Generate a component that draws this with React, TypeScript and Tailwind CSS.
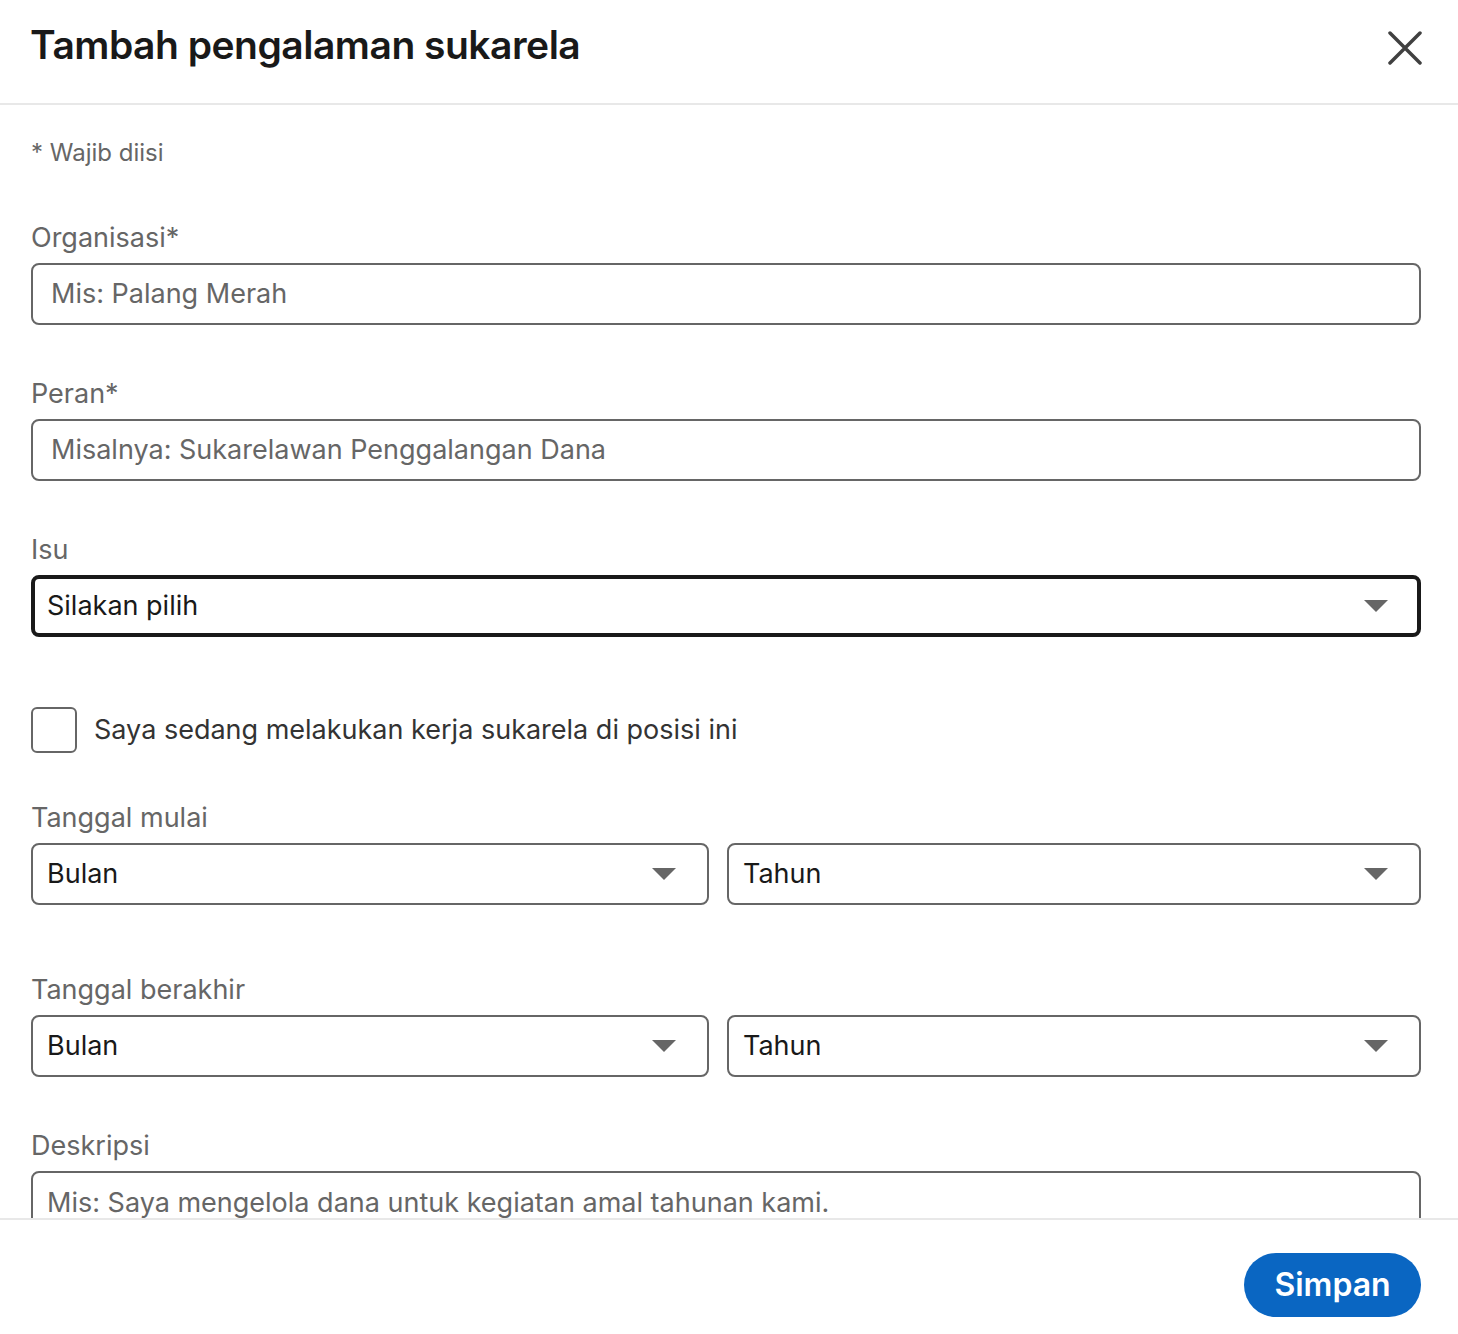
import { useState } from "react"

function Caret() {
  return (
    <svg width="24" height="12" viewBox="0 0 24 12" className="shrink-0">
      <path d="M0 0 L24 0 L12 12 Z" fill="#666666" />
    </svg>
  )
}

function Select({ value, focused }: { value: string; focused?: boolean }) {
  return (
    <div
      className={
        focused
          ? "flex h-[62px] items-center justify-between rounded-[8px] border-[4px] border-[#191919] pl-[12px] pr-[29px]"
          : "flex h-[62px] items-center justify-between rounded-[8px] border-2 border-[#666666] pl-[14px] pr-[31px]"
      }
    >
      <span className="text-[27px] text-[#191919]">{value}</span>
      <Caret />
    </div>
  )
}

function Label({ children, className }: { children: React.ReactNode; className?: string }) {
  return (
    <div className={"h-[40px] text-[27px] leading-[40px] text-[#666666] " + (className ?? "")}>
      {children}
    </div>
  )
}

export default function App() {
  const [checked, setChecked] = useState(false)

  return (
    <div
      className="flex h-[1334px] w-[1458px] flex-col overflow-hidden bg-white"
      style={{ fontFamily: "Inter, 'Liberation Sans', sans-serif" }}
    >
      <div className="flex h-[105px] shrink-0 items-start justify-between border-b-2 border-[#e8e8e8] pl-[30px] pr-[36px]">
        <h1 className="mt-[21px] text-[39px] font-semibold leading-[48px] tracking-[-0.5px] text-[#191919]">
          Tambah pengalaman sukarela
        </h1>
        <button className="mt-[31px]">
          <svg width="34" height="34" viewBox="0 0 34 34">
            <path d="M2 2 L32 32 M32 2 L2 32" stroke="#404040" strokeWidth="3.5" strokeLinecap="round" />
          </svg>
        </button>
      </div>

      <div className="flex-1 overflow-hidden pl-[31px] pr-[37px] pt-[32px]">
        <div className="h-[32px] text-[24px] leading-[32px] text-[#666666]">* Wajib diisi</div>

        <Label className="mt-[49px]">Organisasi*</Label>
        <div className="mt-[5px] flex h-[62px] items-center rounded-[8px] border-2 border-[#666666] pl-[18px]">
          <span className="text-[27px] text-[#666666]">Mis: Palang Merah</span>
        </div>

        <Label className="mt-[49px]">Peran*</Label>
        <div className="mt-[5px] flex h-[62px] items-center rounded-[8px] border-2 border-[#666666] pl-[18px]">
          <span className="text-[27px] text-[#666666]">Misalnya: Sukarelawan Penggalangan Dana</span>
        </div>

        <Label className="mt-[49px]">Isu</Label>
        <div className="mt-[5px]">
          <Select value="Silakan pilih" focused />
        </div>

        <label className="mt-[70px] flex h-[46px] cursor-pointer items-center gap-[17px]">
          <span
            onClick={() => setChecked(!checked)}
            className="h-[46px] w-[46px] rounded-[6px] border-2 border-[#666666]"
          />
          <span className="text-[27px] text-[#333333]">Saya sedang melakukan kerja sukarela di posisi ini</span>
        </label>

        <Label className="mt-[45px]">Tanggal mulai</Label>
        <div className="mt-[5px] grid grid-cols-[678px_1fr] gap-[18px]">
          <Select value="Bulan" />
          <Select value="Tahun" />
        </div>

        <Label className="mt-[65px]">Tanggal berakhir</Label>
        <div className="mt-[5px] grid grid-cols-[678px_1fr] gap-[18px]">
          <Select value="Bulan" />
          <Select value="Tahun" />
        </div>

        <Label className="mt-[49px] text-[#404040]">Deskripsi</Label>
        <div className="mt-[5px] h-[120px] rounded-[8px] border-2 border-[#666666] pl-[14px] pt-[10px]">
          <span className="text-[27px] leading-[40px] text-[#666666]">Mis: Saya mengelola dana untuk kegiatan amal tahunan kami.</span>
        </div>
      </div>

      <div className="flex h-[116px] shrink-0 justify-end border-t-2 border-[#e8e8e8] pr-[37px] pt-[33px]">
        <button className="h-[64px] w-[177px] rounded-full bg-[#0a66c2] text-[32px] font-semibold text-white">
          Simpan
        </button>
      </div>
    </div>
  )
}
